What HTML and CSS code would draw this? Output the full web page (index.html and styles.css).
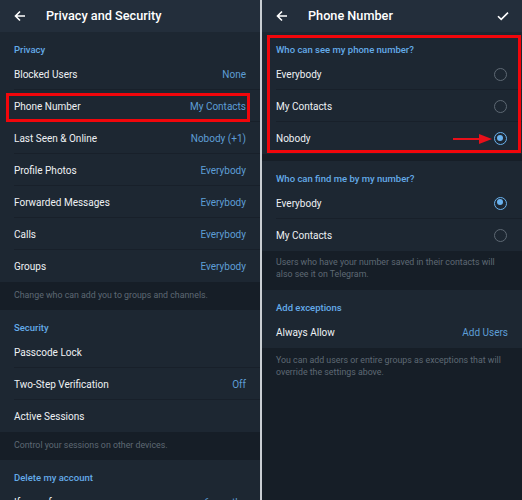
FILE: index.html
```html
<!DOCTYPE html>
<html>
<head>
<meta charset="utf-8">
<link rel="stylesheet" href="styles.css">
</head>
<body>
<div class="screens">
  <div class="panel">
    <div class="topbar">
      <svg class="back" width="12" height="12" viewBox="0 0 12 12"><path d="M11 6H1.8M6 1.5L1.5 6L6 10.5" fill="none" stroke="#fff" stroke-width="1.6"/></svg>
      <div class="title">Privacy and Security</div>
    </div>
    <div class="section">
      <div class="sec-head">Privacy</div>
      <div class="row"><span class="label">Blocked Users</span><span class="value">None</span></div>
      <div class="row boxed"><span class="label">Phone Number</span><span class="value">My Contacts</span></div>
      <div class="row"><span class="label">Last Seen &amp; Online</span><span class="value">Nobody (+1)</span></div>
      <div class="row"><span class="label">Profile Photos</span><span class="value">Everybody</span></div>
      <div class="row"><span class="label">Forwarded Messages</span><span class="value">Everybody</span></div>
      <div class="row"><span class="label">Calls</span><span class="value">Everybody</span></div>
      <div class="row"><span class="label">Groups</span><span class="value">Everybody</span></div>
    </div>
    <div class="info">Change who can add you to groups and channels.</div>
    <div class="section">
      <div class="sec-head">Security</div>
      <div class="row"><span class="label">Passcode Lock</span></div>
      <div class="row"><span class="label">Two-Step Verification</span><span class="value">Off</span></div>
      <div class="row"><span class="label">Active Sessions</span></div>
    </div>
    <div class="info">Control your sessions on other devices.</div>
    <div class="section">
      <div class="sec-head">Delete my account</div>
      <div class="row"><span class="label">If away for</span><span class="value">6 months</span></div>
    </div>
  </div>
  <div class="panel right">
    <div class="topbar">
      <svg class="back" width="12" height="12" viewBox="0 0 12 12"><path d="M11 6H1.8M6 1.5L1.5 6L6 10.5" fill="none" stroke="#fff" stroke-width="1.6"/></svg>
      <div class="title">Phone Number</div>
      <svg class="check" width="12" height="10" viewBox="0 0 12 10"><path d="M1 5.2L4.2 8.4L11 1.6" fill="none" stroke="#fff" stroke-width="1.6"/></svg>
    </div>
    <div class="section boxed-sec">
      <div class="sec-head">Who can see my phone number?</div>
      <div class="row"><span class="label">Everybody</span><span class="radio"></span></div>
      <div class="row"><span class="label">My Contacts</span><span class="radio"></span></div>
      <div class="row"><span class="label">Nobody</span>
        <svg class="arrow" width="40" height="12" viewBox="0 0 40 12"><path d="M0 6H28" stroke="#e8101a" stroke-width="2"/><path d="M26 1L39 6L26 11Z" fill="#e8101a"/></svg>
        <span class="radio on"></span></div>
    </div>
    <div class="gap"></div>
    <div class="section">
      <div class="sec-head">Who can find me by my number?</div>
      <div class="row"><span class="label">Everybody</span><span class="radio on"></span></div>
      <div class="row"><span class="label">My Contacts</span><span class="radio"></span></div>
    </div>
    <div class="info two">Users who have your number saved in their contacts will also see it on Telegram.</div>
    <div class="section">
      <div class="sec-head">Add exceptions</div>
      <div class="row"><span class="label">Always Allow</span><span class="value">Add Users</span></div>
    </div>
    <div class="info two rest">You can add users or entire groups as exceptions that will override the settings above.</div>
  </div>
</div>
</body>
</html>
```
FILE: styles.css
```css
* { box-sizing: border-box; }
html, body { margin: 0; padding: 0; }
body {
  width: 522px;
  height: 500px;
  overflow: hidden;
  background: #161e27;
  font-family: Roboto, "Noto Sans", sans-serif;
  color: #f2f4f6;
}
.screens {
  display: flex;
  height: 500px;
  background: #c9ced3;
}
.panel {
  width: 260px;
  height: 500px;
  overflow: hidden;
  display: flex;
  flex-direction: column;
  background: #161e27;
}
.panel.right {
  width: 260px;
  margin-left: 2px;
  position: relative;
}
.topbar {
  height: 32px;
  flex: none;
  background: #232e3b;
  display: flex;
  align-items: center;
  padding: 0 13px 1px 14px;
}
.back { flex: none; }
.title {
  margin-left: 20px;
  font-size: 12.7px;
  font-weight: 500;
  color: #ffffff;
  flex: 1;
}
.check { flex: none; }
.section {
  flex: none;
  background: #1d2732;
  position: relative;
}
.sec-head {
  height: 26px;
  padding: 12px 14px 0;
  font-size: 9.5px;
  font-weight: 500;
  color: #64abe9;
  line-height: 12px;
}
.row {
  height: 32px;
  margin-left: 14px;
  padding-right: 14px;
  padding-top: 1px;
  display: flex;
  align-items: center;
  justify-content: space-between;
  font-size: 10px;
  border-bottom: 1px solid #18202a;
  position: relative;
}
.row:last-child { border-bottom: none; }
.label { color: #eef1f4; }
.value { color: #5d9ed6; }
.info {
  flex: none;
  height: 28px;
  padding: 0 14px 3px;
  display: flex;
  align-items: center;
  font-size: 8.8px;
  color: #5e6974;
  background: #161e27;
}
.info.two {
  height: 39px;
  align-items: flex-start;
  padding-top: 6px;
  padding-bottom: 0;
  line-height: 11.5px;
  padding-right: 18px;
}
.info.rest { flex: 1; padding-top: 7px; }
.gap { height: 7px; flex: none; background: #161e27; }
.radio {
  width: 13px;
  height: 13px;
  border: 1.6px solid #5d6873;
  border-radius: 50%;
  margin-right: 1px;
  position: relative;
  flex: none;
}
.radio.on { border-color: #6ab2ee; }
.radio.on::after {
  content: "";
  position: absolute;
  left: 1.9px; top: 1.9px;
  width: 6px; height: 6px;
  border-radius: 50%;
  background: #6ab2ee;
}
.arrow {
  position: absolute;
  right: 29px;
  top: 11px;
}
.row.boxed::after {
  content: "";
  position: absolute;
  left: -8px;
  right: 10px;
  top: 3px;
  bottom: -1px;
  border: 3px solid #f2060b;
}
.boxed-sec::after {
  content: "";
  position: absolute;
  left: 5px;
  right: 1px;
  top: 3px;
  bottom: 1px;
  border: 3px solid #f2060b;
  pointer-events: none;
}
```
